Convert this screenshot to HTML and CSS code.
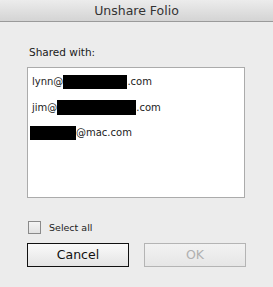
FILE: index.html
```html
<!DOCTYPE html>
<html>
<head>
<meta charset="utf-8">
<link rel="stylesheet" href="styles.css">
</head>
<body>
<div class="dialog">
  <div class="titlebar">Unshare Folio</div>
  <div class="content">
    <div class="label">Shared with:</div>
    <div class="list">
      <div class="row">lynn@<span class="redact r1"></span>.com</div>
      <div class="row">jim@<span class="redact r2"></span>.com</div>
      <div class="row"><span class="redact r3"></span>@mac.com</div>
    </div>
    <label class="check"><span class="box"></span><span class="check-text">Select all</span></label>
    <div class="buttons">
      <div class="btn cancel">Cancel</div>
      <div class="btn ok">OK</div>
    </div>
  </div>
</div>
</body>
</html>
```
FILE: styles.css
```css
html, body {
  margin: 0;
  padding: 0;
  background: #ececec;
}
body {
  font-family: "DejaVu Sans", "Liberation Sans", sans-serif;
  color: #1a1a1a;
}
.dialog {
  width: 273px;
  height: 287px;
  background: #ececec;
}
.titlebar {
  height: 21px;
  line-height: 22px;
  text-align: center;
  font-size: 12.5px;
  color: #333;
  background: linear-gradient(#ececec, #d4d4d4);
  border-bottom: 1px solid #9a9a9a;
  border-radius: 4px 4px 0 0;
}
.content {
  padding: 24px 27px 0 27px;
}
.label {
  font-size: 10.5px;
  line-height: 13px;
  padding-left: 2px;
  height: 13px;
}
.list {
  margin-top: 8px;
  width: 218px;
  height: 131px;
  background: #fff;
  border: 1px solid #ababab;
  padding-top: 1px;
  box-sizing: border-box;
}
.row {
  display: flex;
  align-items: center;
  height: 25.5px;
  padding-left: 4px;
  font-size: 10px;
  color: #222;
}
.redact {
  display: inline-block;
  background: #000;
  height: 14px;
}
.r1 { width: 64px; }
.r2 { width: 79px; height: 15px; }
.r3 { width: 46px; margin-left: -2px; }
.check {
  display: flex;
  align-items: center;
  margin-top: 23px;
  padding-left: 1px;
  height: 13px;
}
.box {
  width: 11px;
  height: 11px;
  border: 1px solid #8a8a8a;
  background: linear-gradient(#f4f4f4, #e2e2e2);
}
.check-text {
  margin-left: 8px;
  font-size: 9.5px;
  color: #222;
}
.buttons {
  display: flex;
  gap: 15px;
  margin-top: 9px;
}
.btn {
  width: 100px;
  height: 22px;
  line-height: 22px;
  text-align: center;
  font-size: 12.5px;
}
.cancel {
  border: 1px solid #111;
  background: linear-gradient(#fafafa, #e4e4e4);
  color: #111;
}
.ok {
  border: 1px solid #b4b4b4;
  background: linear-gradient(#f2f2f2, #e6e6e6);
  color: #b0b0b0;
}
```
